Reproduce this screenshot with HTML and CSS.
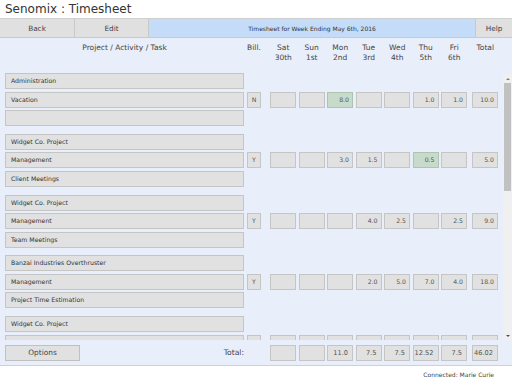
FILE: index.html
```html
<!DOCTYPE html>
<html lang="en">
<head>
    <meta charset="UTF-8">
    <title>Senomix : Timesheet</title>
    <link rel="stylesheet" href="styles.css">
</head>
<body>

<div class="title">Senomix : Timesheet</div>

<div class="toolbar">
    <div class="tb-btn tb-back">Back</div>
    <div class="tb-btn tb-edit">Edit</div>
    <div class="tb-week">Timesheet for Week Ending May 6th, 2016</div>
    <div class="tb-btn tb-help">Help</div>
</div>

<div class="colhead grid">
    <div class="ch-task">Project / Activity / Task</div>
    <div class="ch-bill">Bill.</div>
    <div class="ch-day">Sat<br>30th</div>
    <div class="ch-day">Sun<br>1st</div>
    <div class="ch-day">Mon<br>2nd</div>
    <div class="ch-day">Tue<br>3rd</div>
    <div class="ch-day">Wed<br>4th</div>
    <div class="ch-day">Thu<br>5th</div>
    <div class="ch-day">Fri<br>6th</div>
    <div class="ch-total">Total</div>
</div>

<div class="sheet">
    <div class="sheet-body" id="sheet"></div>
    <div class="scrollbar">
        <div class="sb-btn"><span class="sb-up"></span></div>
        <div class="sb-track">
            <div class="sb-thumb"></div>
        </div>
        <div class="sb-btn"><span class="sb-down"></span></div>
    </div>
</div>

<div class="footer grid">
    <div class="foot-left">
        <div class="btn-options">Options</div>
        <div class="foot-label">Total:</div>
    </div>
    <div></div>
    <div class="cell"></div>
    <div class="cell"></div>
    <div class="cell">11.0</div>
    <div class="cell">7.5</div>
    <div class="cell">7.5</div>
    <div class="cell">12.52</div>
    <div class="cell">7.5</div>
    <div class="cell cell-total">46.02</div>
</div>

<div class="status">Connected: Marie Curie</div>

<script>
    // project / activity / task, bill flag, hours Sat..Fri, green = highlighted day
    const groups = [
        { project: "Administration", activity: "Vacation", task: "", bill: "N",
          hours: ["", "", "8.0", "", "", "1.0", "1.0"], green: [2], total: "10.0" },
        { project: "Widget Co. Project", activity: "Management", task: "Client Meetings", bill: "Y",
          hours: ["", "", "3.0", "1.5", "", "0.5", ""], green: [5], total: "5.0" },
        { project: "Widget Co. Project", activity: "Management", task: "Team Meetings", bill: "Y",
          hours: ["", "", "", "4.0", "2.5", "", "2.5"], green: [], total: "9.0" },
        { project: "Banzai Industries Overthruster", activity: "Management", task: "Project Time Estimation", bill: "Y",
          hours: ["", "", "", "2.0", "5.0", "7.0", "4.0"], green: [], total: "18.0" },
        { project: "Widget Co. Project", activity: "Documentation", task: "User Guide", bill: "Y",
          hours: ["", "", "", "", "", "4.02", ""], green: [], total: "4.02" }
    ];

    const sheet = document.getElementById('sheet');

    groups.forEach(g => {
        const group = document.createElement('div');
        group.classList.add('group');

        let cells = `<div class="cell cell-bill">${g.bill}</div>`;
        g.hours.forEach((h, i) => {
            const cls = g.green.includes(i) ? 'cell cell-green' : 'cell';
            cells += `<div class="${cls}">${h}</div>`;
        });
        cells += `<div class="cell cell-total">${g.total}</div>`;

        group.innerHTML = `
            <div class="row grid"><div class="label">${g.project}</div></div>
            <div class="row grid"><div class="label">${g.activity}</div>${cells}</div>
            <div class="row grid"><div class="label">${g.task}</div></div>
        `;
        sheet.appendChild(group);
    });
</script>

</body>
</html>
```

FILE: styles.css
```css
body {
    font-family: "DejaVu Sans", Verdana, sans-serif;
    background-color: #ffffff;
    color: #444;
    margin: 0;
    padding: 0;
    width: 512px;
    height: 384px;
    overflow: hidden;
}
.title {
    height: 18px;
    line-height: 18px;
    padding-left: 5px;
    font-size: 12px;
    color: #333;
}
.toolbar {
    display: flex;
    height: 20px;
    box-sizing: border-box;
    border-top: 1px solid #cfcfcf;
    border-bottom: 1px solid #c9c9c9;
    background-color: #e0e0e0;
}
.tb-btn {
    display: flex;
    align-items: center;
    justify-content: center;
    font-size: 7.3px;
    color: #444;
}
.tb-back {
    width: 74px;
    border-right: 1px solid #c9c9c9;
}
.tb-edit {
    width: 73px;
    border-right: 1px solid #c9c9c9;
}
.tb-week {
    flex: 1;
    display: flex;
    align-items: center;
    justify-content: center;
    background-color: #c5dcf9;
    border-right: 1px solid #c9c9c9;
    font-size: 6px;
    color: #333;
}
.tb-help {
    width: 36px;
}

/* shared column layout */
.grid {
    display: grid;
    grid-template-columns: 239px 26px repeat(7, 28.5px) 28.5px;
    padding-left: 5px;
}

.colhead {
    background-color: #e8eefa;
    height: 34px;
    box-sizing: border-box;
    padding-top: 5px;
    font-size: 7.5px;
    line-height: 10px;
    color: #444;
}
.ch-task {
    text-align: center;
}
.ch-bill {
    text-align: center;
    padding-right: 6px;
}
.ch-day {
    text-align: center;
    padding-right: 2px;
}
.ch-total {
    text-align: center;
    padding-left: 3px;
}

.sheet {
    display: flex;
    height: 268px;
    background-color: #e8eefa;
}
.sheet-body {
    flex: 1;
    overflow: hidden;
    padding-top: 1px;
}
.scrollbar {
    width: 9px;
    display: flex;
    flex-direction: column;
    background-color: #f0f0f0;
    margin-top: 2px;
}
.sb-btn {
    height: 9px;
    display: flex;
    align-items: center;
    justify-content: center;
}
.sb-up {
    border-left: 2px solid transparent;
    border-right: 2px solid transparent;
    border-bottom: 2px solid #808080;
}
.sb-down {
    border-left: 2px solid transparent;
    border-right: 2px solid transparent;
    border-top: 2px solid #505050;
}
.sb-track {
    flex: 1;
    padding: 0 1px;
}
.sb-thumb {
    height: 108px;
    background-color: #c1c1c1;
}

.group {
    display: grid;
    row-gap: 2.5px;
    margin-bottom: 7.75px;
}
.row {
    height: 16px;
}
.label {
    height: 16px;
    box-sizing: border-box;
    background-color: #e1e1e1;
    border: 1px solid #c5c5c5;
    padding-left: 5px;
    font-size: 6.2px;
    line-height: 14px;
    color: #333;
    white-space: nowrap;
    overflow: hidden;
}
.cell {
    width: 26px;
    height: 16px;
    box-sizing: border-box;
    background-color: #e1e1e1;
    border: 1px solid #c5c5c5;
    padding-right: 3px;
    text-align: right;
    font-size: 6.2px;
    line-height: 14px;
    color: #555;
}
.cell-bill {
    width: 14px;
    margin-left: 3px;
    padding: 0;
    text-align: center;
}
.cell-green {
    background-color: #c8dbca;
    border-color: #afc3b1;
}
.cell-total {
    justify-self: end;
}

.footer {
    height: 26px;
    box-sizing: border-box;
    background-color: #e8eefa;
    border-bottom: 1px solid #d0d0d0;
    align-items: center;
}
.footer .cell {
    font-size: 6.6px;
    padding-right: 4px;
}
.foot-left {
    display: flex;
    align-items: center;
    justify-content: space-between;
}
.btn-options {
    width: 75px;
    height: 16px;
    box-sizing: border-box;
    background-color: #e1e1e1;
    border: 1px solid #c0c0c0;
    text-align: center;
    font-size: 7.4px;
    line-height: 14px;
    color: #444;
}
.foot-label {
    font-size: 7.6px;
    color: #444;
}
.status {
    height: 18px;
    line-height: 18px;
    text-align: right;
    padding-right: 18px;
    font-size: 6px;
    color: #444;
}
```
